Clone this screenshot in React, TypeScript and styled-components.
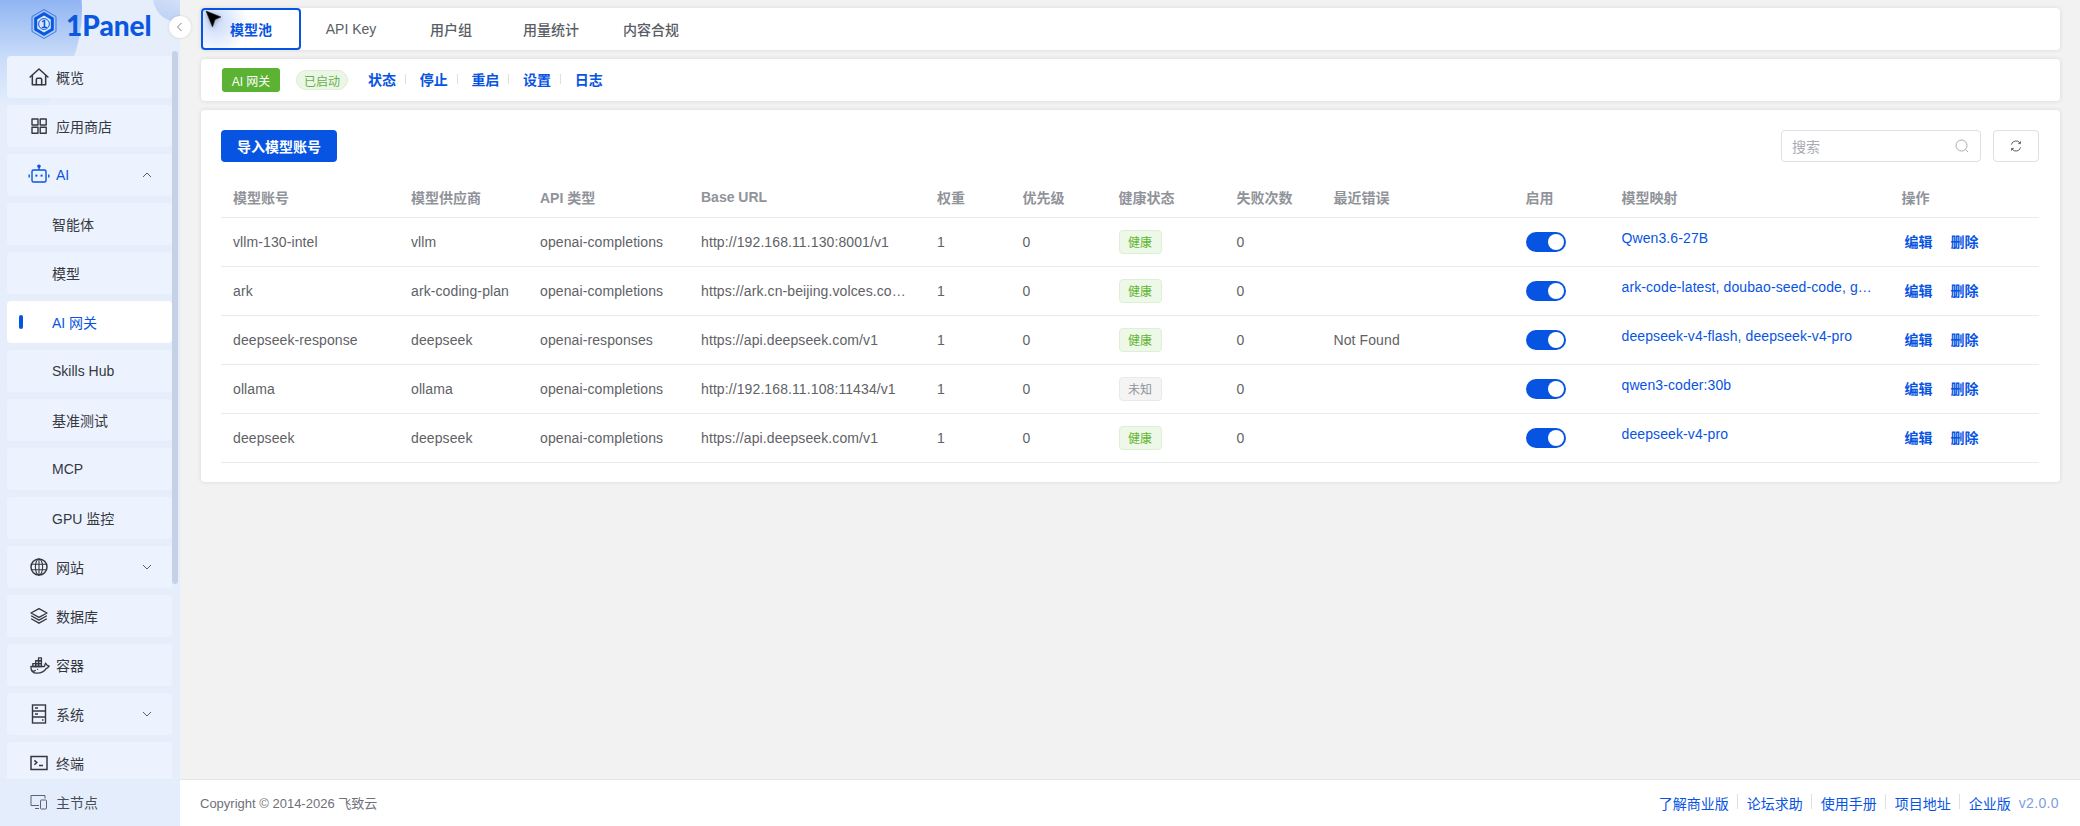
import React from 'react';
import styled, { createGlobalStyle } from 'styled-components';
import { TbBrandDocker } from 'react-icons/tb';

const BLUE = '#0854e2';
const SANS = '"Liberation Sans", "Noto Sans CJK SC", sans-serif';

const Global = createGlobalStyle`
  html, body { margin: 0; padding: 0; height: 100%; background: #f2f2f2; }
  * { box-sizing: border-box; }
  body { font-family: ${SANS}; font-size: 14px; color: #606266; overflow: hidden; }
`;

const Shell = styled.div`display: flex; width: 2080px; height: 826px; position: relative; overflow: hidden;`;

const Sidebar = styled.aside`
  position: relative; width: 180px; flex: none; display: flex; flex-direction: column;
  background: #e6eefc; overflow: hidden;
`;
const BlobA = styled.div`
  position: absolute; left: -202px; top: -132px; width: 284px; height: 284px; border-radius: 50%;
  background: linear-gradient(180deg, #8fb4f2 46%, #c8dbf9 66%, #e6eefc 85%);
`;
const BlobB = styled.div`
  position: absolute; left: 153px; top: -28px; width: 50px; height: 50px; border-radius: 50%;
  background: linear-gradient(200deg, #e4ecfb 20%, #b9cff3 100%);
`;
const LogoRow = styled.div`
  position: relative; height: 56px; flex: none; display: flex; align-items: flex-start;
  padding: 8px 0 0 31px; gap: 9px;
`;
const LogoText = styled.span`
  font-family: Lato, ${SANS}; font-weight: 900; font-size: 28px; line-height: 33px; color: #0a58e0;
  margin-top: 1px;
`;
const Nav = styled.nav`
  position: relative; flex: 1; min-height: 0; overflow: hidden; padding-left: 7px;
  display: flex; flex-direction: column; gap: 7px;
`;
const Item = styled.div<{ $active?: boolean; $blue?: boolean; $sub?: boolean }>`
  position: relative; flex: none; width: 165px; height: 42px; border-radius: 4px; display: flex; align-items: center;
  padding-left: ${p => (p.$sub ? '45px' : '23px')};
  background: ${p => (p.$active ? '#ffffff' : '#edf3fe')};
  color: ${p => (p.$active || p.$blue ? BLUE : '#35383f')};
`;
const IconBox = styled.span`
  width: 18px; height: 18px; margin-right: 8px; display: flex; align-items: center; justify-content: center;
  svg { display: block; flex: none; }
`;
const Caret = styled.svg`position: absolute; left: 135px; top: 16px;`;
const ActiveBar = styled.i`position: absolute; left: 12px; top: 14px; width: 4px; height: 14px; border-radius: 2px; background: ${BLUE};`;
const ScrollThumb = styled.div`position: absolute; left: 172px; top: 51px; width: 6px; height: 533px; border-radius: 3px; background: #c5d2e6;`;
const SideFoot = styled.div`
  position: relative; flex: none; height: 47px; background: #e3edfc; border-top: 1px solid #e6ebf3;
  display: flex; align-items: center; padding: 0 0 2px 30px; color: #4a4d55;
`;
const Collapse = styled.div`
  position: absolute; left: 169px; top: 16px; width: 22px; height: 22px; border-radius: 50%; background: #fff;
  box-shadow: 0 0 3px rgba(0,0,0,.14); display: flex; align-items: center; justify-content: center; z-index: 3;
`;

const Main = styled.main`flex: 1; min-width: 0; display: flex; flex-direction: column;`;
const Content = styled.div`flex: 1; padding: 8px 20px 0 21px; display: flex; flex-direction: column; gap: 9px;`;
const Card = styled.section`background: #fff; border-radius: 4px; box-shadow: 0 0 4px rgba(40, 50, 70, .13);`;
const TabsCard = styled(Card)`display: flex; height: 42px;`;
const Tab = styled.div<{ $active?: boolean }>`
  width: 100px; height: 42px; display: flex; align-items: center; justify-content: center; border-radius: 4px;
  color: ${p => (p.$active ? BLUE : '#5a5e66')}; font-weight: ${p => (p.$active ? 700 : 500)};
  border: ${p => (p.$active ? `2px solid ${BLUE}` : '2px solid transparent')};
  ${p => p.$active && `background: radial-gradient(circle at 12px 12px, rgba(60,120,240,.28), rgba(255,255,255,0) 34px);`}
`;
const AppCard = styled(Card)`height: 42px; display: flex; align-items: center; padding-left: 21px;`;
const AppTag = styled.span`
  width: 58px; height: 24px; border-radius: 3px; background: #5bb233; color: #fff; font-size: 12px;
  display: flex; align-items: center; justify-content: center; margin-right: 16px;
`;
const StatusPill = styled.span`
  width: 52px; height: 20px; border-radius: 10px; background: #ecf6e7; border: 1px solid #dcefd2; color: #67b146; font-size: 12px;
  display: flex; align-items: center; justify-content: center; margin-right: 20px;
`;
const AppAction = styled.span<{ $last?: boolean }>`
  color: ${BLUE}; font-weight: 600; width: ${p => (p.$last ? 'auto' : '38px')}; position: relative; margin: 0 13.7px 2px 0;
  display: inline-block;
  ${p => !p.$last && `&::after { content: ''; position: absolute; right: 0; top: 5px; height: 10px; width: 1px; background: #dcdfe6; }`}
`;

const TableCard = styled(Card)`padding: 20px 21px 21px 20px; height: 372px;`;
const Toolbar = styled.div`display: flex; align-items: center; justify-content: space-between; height: 32px; margin-bottom: 15px;`;
const PrimaryBtn = styled.button`
  width: 116px; height: 32px; border: 0; border-radius: 4px; background: ${BLUE}; color: #fff;
  font: 600 14px ${SANS}; padding: 0;
`;
const ToolRight = styled.div`display: flex; gap: 12px;`;
const Search = styled.div`
  width: 200px; height: 32px; border: 1px solid #dcdfe6; border-radius: 4px; display: flex; align-items: center;
  justify-content: space-between; padding: 0 11px 0 10px; color: #a8abb2;
`;
const IconBtn = styled.div`
  width: 46px; height: 32px; border: 1px solid #dcdfe6; border-radius: 4px; display: flex; align-items: center; justify-content: center;
`;
const Table = styled.table`width: 1818px; border-collapse: collapse; table-layout: fixed;`;
const Th = styled.th`
  height: 40px; padding: 0 12px; text-align: left; color: #909399; font-weight: 600; font-size: 14px;
  border-bottom: 1px solid #e8eaee; white-space: nowrap;
`;
const Td = styled.td`
  height: 49px; padding: 0 12px; border-bottom: 1px solid #e8eaee; color: #606266; white-space: nowrap; letter-spacing: .1px;
`;
const Health = styled.span<{ $ok: boolean }>`
  display: flex; align-items: center; justify-content: center; width: 43px; height: 24px; border-radius: 4px; font-size: 12px;
  background: ${p => (p.$ok ? '#eef8e9' : '#f4f4f5')}; border: 1px solid ${p => (p.$ok ? '#ddf0d3' : '#e9e9eb')};
  color: ${p => (p.$ok ? '#62b62f' : '#909399')};
`;
const Switch = styled.span`
  display: block; width: 40px; height: 20px; border-radius: 10px; background: ${BLUE}; position: relative;
  &::after { content: ''; position: absolute; right: 2px; top: 2px; width: 16px; height: 16px; border-radius: 50%; background: #fff; }
`;
const MapLink = styled.div`color: ${BLUE}; margin-bottom: 8px; white-space: nowrap;`;
const RowActions = styled.div`display: flex; gap: 18px; padding-left: 3px; margin-bottom: 2px;`;
const RowAction = styled.span`color: ${BLUE}; font-weight: 600; letter-spacing: 0;`;

const Foot = styled.footer`
  height: 47px; flex: none; background: #fff; border-top: 1px solid #e4e6ea; display: flex; align-items: center;
  justify-content: space-between; padding: 0 21px 0 20px;
`;
const Copy = styled.span`color: #6e7178; font-size: 13px; margin-bottom: 2px;`;
const FootLinks = styled.div`display: flex; align-items: center;`;
const FootLink = styled.span<{ $sep?: boolean }>`
  color: ${BLUE}; position: relative; margin-right: ${p => (p.$sep ? '18px' : '8px')};
  ${p => p.$sep && `&::after { content: ''; position: absolute; right: -9.5px; top: 1px; height: 15px; width: 1px; background: #dcdfe6; }`}
`;
const Version = styled.span`color: #7d9ee0; font-size: 14px; letter-spacing: .35px;`;
const Cursor = styled.svg`position: absolute; left: 205px; top: 10px; z-index: 5; filter: drop-shadow(0 1px 2px rgba(0,0,0,.3));`;

type IconProps = { children: React.ReactNode; size?: number };
const Ico = ({ children, size = 18 }: IconProps) => (
  <svg width={size} height={size} viewBox="0 0 18 18" fill="none" stroke="currentColor" strokeWidth="1.4" strokeLinejoin="round" strokeLinecap="round">{children}</svg>
);
const HomeI = () => <Ico size={20}><path d="M1 9 9 1.8 17 9" /><path d="M3 7.6V16h12V7.6" /><path d="M6.6 16v-4.8a1 1 0 0 1 1-1h2.8a1 1 0 0 1 1 1V16" /></Ico>;
const GridI = () => <Ico><rect x="2" y="2" width="6" height="6" /><rect x="10.2" y="2" width="6" height="6" /><rect x="2" y="10.2" width="6" height="6" /><rect x="10.2" y="10.2" width="6" height="6" /></Ico>;
const BotI = () => (
  <svg width="22" height="20" viewBox="0 0 22 20" fill="none" stroke="currentColor" strokeWidth="1.4" style={{ margin: '-2px -2px 0' }}>
    <rect x="4" y="6" width="14" height="12" rx="1.5" /><path d="M11 6V3" /><circle cx="11" cy="2.2" r="1.1" fill="currentColor" />
    <rect x="7.4" y="10.6" width="2" height="2" fill="currentColor" stroke="none" /><rect x="12.6" y="10.6" width="2" height="2" fill="currentColor" stroke="none" />
    <path d="M1.2 10.5v3M20.8 10.5v3" />
  </svg>
);
const GlobeI = () => <Ico><circle cx="9" cy="9" r="8" strokeWidth="1.5" /><ellipse cx="9" cy="9" rx="3.6" ry="8" strokeWidth="1.1" /><path d="M1.4 6.2h15.2M1.4 11.8h15.2M9 1v16" strokeWidth="1.1" /></Ico>;
const LayersI = () => <Ico><path d="M9 1.6 17 6 9 10.4 1 6Z" /><path d="M1.6 9 9 13.1 16.4 9" /><path d="M1.6 12 9 16.2 16.4 12" /></Ico>;
const ServerI = () => (
  <svg width="16" height="20" viewBox="0 0 16 20" fill="none" stroke="currentColor" strokeWidth="1.4">
    <rect x="1.5" y="1" width="13" height="18" /><path d="M1.5 7h13M1.5 13h13" /><path d="M4 4h3M4 10h3M11 16h1.5" />
  </svg>
);
const TermI = () => (
  <svg width="18" height="16" viewBox="0 0 18 16" fill="none" stroke="currentColor" strokeWidth="1.5">
    <rect x="1" y="1.5" width="16" height="13" /><path d="m4.4 5.4 2.4 2.2-2.4 2.2M9 10.6h4" />
  </svg>
);
const DeviceI = () => (
  <svg width="18" height="16" viewBox="0 0 18 16" fill="none" stroke="#5f636b" strokeWidth="1">
    <path d="M9 11.5H1V1.5h14v3" /><path d="M5 14.5h4" /><rect x="10.5" y="6" width="6" height="9" rx=".8" />
  </svg>
);
const Chev = ({ up }: { up?: boolean }) => (
  <Caret width="10" height="10" viewBox="0 0 10 10" fill="none" stroke="#4a4d55" strokeWidth="0.9">
    <path d={up ? 'M1 7 5 3l4 4' : 'M1 3l4 4 4-4'} />
  </Caret>
);

const nav = [
  { t: '概览', i: <HomeI /> }, { t: '应用商店', i: <GridI /> },
  { t: 'AI', i: <BotI />, blue: true, caret: 'up' },
  { t: '智能体', sub: true }, { t: '模型', sub: true }, { t: 'AI 网关', sub: true, active: true },
  { t: 'Skills Hub', sub: true }, { t: '基准测试', sub: true }, { t: 'MCP', sub: true }, { t: 'GPU 监控', sub: true },
  { t: '网站', i: <GlobeI />, caret: 'down' }, { t: '数据库', i: <LayersI /> },
  { t: '容器', i: <TbBrandDocker size={23} strokeWidth={1.4} /> },
  { t: '系统', i: <ServerI />, caret: 'down' }, { t: '终端', i: <TermI /> },
];

const rows = [
  ['vllm-130-intel', 'vllm', 'openai-completions', 'http://192.168.11.130:8001/v1', '', 'Qwen3.6-27B', true],
  ['ark', 'ark-coding-plan', 'openai-completions', 'https://ark.cn-beijing.volces.co…', '', 'ark-code-latest, doubao-seed-code, g…', true],
  ['deepseek-response', 'deepseek', 'openai-responses', 'https://api.deepseek.com/v1', 'Not Found', 'deepseek-v4-flash, deepseek-v4-pro', true],
  ['ollama', 'ollama', 'openai-completions', 'http://192.168.11.108:11434/v1', '', 'qwen3-coder:30b', false],
  ['deepseek', 'deepseek', 'openai-completions', 'https://api.deepseek.com/v1', '', 'deepseek-v4-pro', true],
] as const;

const cols = [178, 129, 161, 236, 85.5, 96, 118, 97, 192, 96, 280, 149.5];
const heads = ['模型账号', '模型供应商', 'API 类型', 'Base URL', '权重', '优先级', '健康状态', '失败次数', '最近错误', '启用', '模型映射', '操作'];

export default function App() {
  return (
    <Shell>
      <Global />
      <Sidebar>
        <BlobA /><BlobB />
        <LogoRow>
          <svg width="26" height="32" viewBox="0 0 26 32" fill="none">
            <path d="M13 1.5 25 8.5v15L13 30.5 1 23.5v-15Z" stroke="#0a58e0" strokeWidth="1" opacity=".7" />
            <path d="M13 4 22.8 9.8v12.4L13 28 3.2 22.2V9.8Z" fill="#0a58e0" />
            <path d="M13 7.6 19.8 11.5v9L13 24.4 6.2 20.5v-9Z" fill="#dbe7fb" />
            <circle cx="13" cy="16" r="5.4" stroke="#0a58e0" strokeWidth="1" />
            <text x="13" y="20" textAnchor="middle" fontSize="11" fontWeight="700" fontFamily="Liberation Sans" fill="#0a58e0">1</text>
          </svg>
          <LogoText>1Panel</LogoText>
        </LogoRow>
        <Nav>
          {nav.map(n => (
            <Item key={n.t} $active={n.active} $blue={n.blue} $sub={n.sub}>
              {n.active && <ActiveBar />}
              {n.i && <IconBox>{n.i}</IconBox>}
              {n.t}
              {n.caret && <Chev up={n.caret === 'up'} />}
            </Item>
          ))}
        </Nav>
        <ScrollThumb />
        <SideFoot><IconBox><DeviceI /></IconBox>主节点</SideFoot>
      </Sidebar>
      <Collapse>
        <svg width="10" height="10" viewBox="0 0 10 10" fill="none" stroke="#7a7f88" strokeWidth="1"><path d="M6.5 1 2.5 5l4 4" /></svg>
      </Collapse>
      <Main>
        <Content>
          <TabsCard>
            <Tab $active>模型池</Tab>
            <Tab>API Key</Tab>
            <Tab>用户组</Tab>
            <Tab>用量统计</Tab>
            <Tab>内容合规</Tab>
          </TabsCard>
          <AppCard>
            <AppTag>AI 网关</AppTag>
            <StatusPill>已启动</StatusPill>
            <AppAction>状态</AppAction>
            <AppAction>停止</AppAction>
            <AppAction>重启</AppAction>
            <AppAction>设置</AppAction>
            <AppAction $last>日志</AppAction>
          </AppCard>
          <TableCard>
            <Toolbar>
              <PrimaryBtn>导入模型账号</PrimaryBtn>
              <ToolRight>
                <Search>
                  搜索
                  <svg width="14" height="14" viewBox="0 0 14 14" fill="none" stroke="#a8abb2" strokeWidth="1"><circle cx="6.5" cy="6.5" r="5.5" /><path d="m10.6 10.6 2.4 2.4" /></svg>
                </Search>
                <IconBtn>
                  <svg width="12" height="12" viewBox="0 0 14 14" fill="none" stroke="#55585f" strokeWidth="1.1"><path d="M1.6 5.4A5.6 5.6 0 0 1 11.6 3.4M12.4 8.6A5.6 5.6 0 0 1 2.4 10.6" /><path d="M12.2 1.6V4.2H9.6M1.8 12.4V9.8h2.6" /></svg>
                </IconBtn>
              </ToolRight>
            </Toolbar>
            <Table>
              <colgroup>{cols.map((w, i) => <col key={i} width={w} />)}</colgroup>
              <thead><tr>{heads.map(h => <Th key={h}>{h}</Th>)}</tr></thead>
              <tbody>
                {rows.map(r => (
                  <tr key={r[0]}>
                    <Td>{r[0]}</Td><Td>{r[1]}</Td><Td>{r[2]}</Td><Td>{r[3]}</Td>
                    <Td>1</Td><Td>0</Td>
                    <Td><Health $ok={r[6]}>{r[6] ? '健康' : '未知'}</Health></Td>
                    <Td>0</Td><Td>{r[4]}</Td>
                    <Td><Switch /></Td>
                    <Td><MapLink>{r[5]}</MapLink></Td>
                    <Td><RowActions><RowAction>编辑</RowAction><RowAction>删除</RowAction></RowActions></Td>
                  </tr>
                ))}
              </tbody>
            </Table>
          </TableCard>
        </Content>
        <Foot>
          <Copy>Copyright © 2014-2026 飞致云</Copy>
          <FootLinks>
            <FootLink $sep>了解商业版</FootLink>
            <FootLink $sep>论坛求助</FootLink>
            <FootLink $sep>使用手册</FootLink>
            <FootLink $sep>项目地址</FootLink>
            <FootLink>企业版</FootLink>
            <Version>v2.0.0</Version>
          </FootLinks>
        </Foot>
      </Main>
      <Cursor width="18" height="20" viewBox="0 0 18 20"><path d="M1 1 16 7 10 9.5 7.5 17Z" fill="#000" stroke="#222" strokeWidth=".6" strokeLinejoin="round" /></Cursor>
    </Shell>
  );
}
